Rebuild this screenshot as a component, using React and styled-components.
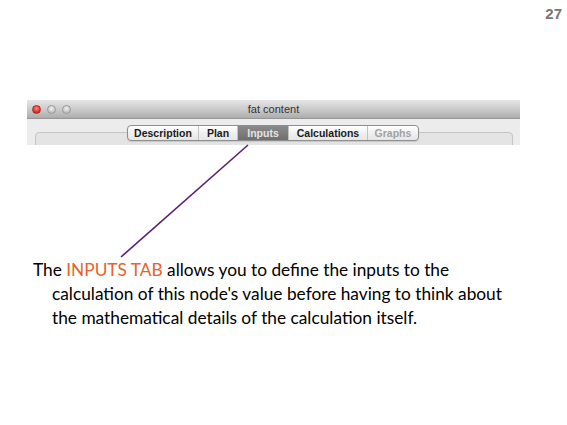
import React from "react";
import styled, { createGlobalStyle } from "styled-components";

const GlobalStyle = createGlobalStyle`
  html, body {
    margin: 0;
    padding: 0;
    background: #ffffff;
  }
`;

const Slide = styled.div`
  position: relative;
  display: flex;
  flex-direction: column;
  width: 567px;
  height: 425px;
  overflow: hidden;
  background: #ffffff;
  font-family: "Lato", "Open Sans", sans-serif;
`;

const PageNumber = styled.div`
  align-self: flex-end;
  margin: 5px 5px 0 0;
  font-family: "Liberation Sans", Arial, sans-serif;
  font-size: 15px;
  font-weight: bold;
  color: #767676;
  line-height: 17px;
`;

const Window = styled.div`
  display: flex;
  flex-direction: column;
  width: 493px;
  height: 45px;
  margin: 78px 0 0 27px;
  background: #ececec;
  overflow: hidden;
`;

const TitleBar = styled.div`
  display: flex;
  flex-shrink: 0;
  align-items: center;
  height: 18px;
  padding: 0 0 0 5px;
  background: linear-gradient(#e6e6e6, #c6c6c6 60%, #acacac);
  border-bottom: 1px solid #969696;
`;

const Lights = styled.div`
  display: flex;
  gap: 6px;
  width: 40px;
`;

const Light = styled.span`
  width: 9px;
  height: 9px;
  border-radius: 50%;
  box-sizing: border-box;
  border: 1px solid ${({ $red }) => ($red ? "#a52a20" : "#9a9a9a")};
  background: ${({ $red }) =>
    $red
      ? "radial-gradient(circle at 50% 35%, #ff8a80, #e0332a 60%, #b22018)"
      : "radial-gradient(circle at 50% 35%, #f2f2f2, #c6c6c6 60%, #acacac)"};
`;

const Title = styled.div`
  flex: 1;
  text-align: center;
  margin-right: 45px;
  font-family: "Liberation Sans", Arial, sans-serif;
  font-size: 11px;
  color: #333333;
`;

const Body = styled.div`
  position: relative;
  flex-shrink: 0;
  padding: 13px 7px 0 8px;
`;

const GroupBox = styled.div`
  height: 30px;
  border: 1px solid #c4c4c4;
  border-radius: 4px;
  background: #e4e4e4;
`;

const Tabs = styled.div`
  position: absolute;
  top: 6px;
  left: 100px;
  display: flex;
  height: 14px;
  border: 1px solid #8e8e8e;
  border-radius: 4px;
  overflow: hidden;
  background: linear-gradient(#ffffff, #f0f0f0 50%, #e6e6e6);
  box-shadow: 0 1px 1px rgba(0, 0, 0, 0.12);
`;

const Tab = styled.div`
  display: flex;
  align-items: center;
  justify-content: center;
  width: ${({ $w }) => $w}px;
  font-family: "Liberation Sans", Arial, sans-serif;
  font-size: 10.5px;
  font-weight: bold;
  color: ${({ $active, $disabled }) =>
    $active ? "#e4e4e4" : $disabled ? "#a2a2a2" : "#1a1a1a"};
  background: ${({ $active }) =>
    $active ? "linear-gradient(#8a8a8a, #6f6f6f)" : "transparent"};
  border-left: ${({ $first }) => ($first ? "none" : "1px solid #c2c2c2")};
`;

const Caption = styled.p`
  margin: 113px 0 0 0;
  padding-left: 52px;
  text-indent: -19px;
  font-size: 17.3px;
  line-height: 24px;
  color: #000000;
  white-space: nowrap;
`;

const Highlight = styled.span`
  color: #e8622a;
`;

const Pointer = styled.svg`
  position: absolute;
  top: 0;
  left: 0;
  pointer-events: none;
`;

const tabs = [
  { label: "Description", w: 70 },
  { label: "Plan", w: 38 },
  { label: "Inputs", w: 50, active: true },
  { label: "Calculations", w: 78 },
  { label: "Graphs", w: 50, disabled: true },
];

export default function App() {
  return (
    <>
      <GlobalStyle />
      <Slide>
        <PageNumber>27</PageNumber>
        <Window>
          <TitleBar>
            <Lights>
              <Light $red />
              <Light />
              <Light />
            </Lights>
            <Title>fat content</Title>
          </TitleBar>
          <Body>
            <GroupBox />
            <Tabs>
              {tabs.map((t, i) => (
                <Tab
                  key={t.label}
                  $w={t.w}
                  $first={i === 0}
                  $active={t.active}
                  $disabled={t.disabled}
                >
                  {t.label}
                </Tab>
              ))}
            </Tabs>
          </Body>
        </Window>
        <Caption>
          The <Highlight>INPUTS TAB</Highlight> allows you to define the inputs to the
          <br />
          calculation of this node's value before having to think about
          <br />
          the mathematical details of the calculation itself.
        </Caption>
        <Pointer width="567" height="425">
          <line x1="248" y1="145" x2="121" y2="257" stroke="#5b1e70" strokeWidth="1.6" />
        </Pointer>
      </Slide>
    </>
  );
}
